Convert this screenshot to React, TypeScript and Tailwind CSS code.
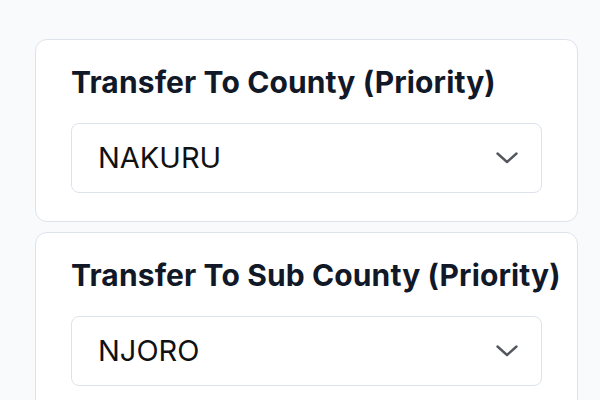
const fields = [
  { label: "Transfer To County (Priority)", value: "NAKURU" },
  { label: "Transfer To Sub County (Priority)", value: "NJORO" },
];

const Chevron = () => (
  <svg width="22" height="12" viewBox="0 0 22 12" fill="none" className="shrink-0">
    <path d="M1.5 1.5 L11 10 L20.5 1.5" stroke="#54585e" strokeWidth="2.4" strokeLinecap="round" strokeLinejoin="round" />
  </svg>
);

export default function App() {
  return (
    <div className="w-[600px] h-[400px] overflow-hidden bg-[#f9fafb] font-['Inter',sans-serif]">
      <div className="ml-[35px] mt-[39px] w-[543px] flex flex-col gap-[10px]">
        {fields.map((f) => (
          <div key={f.label} className="bg-white border border-[#dde3ec] rounded-[12px] pl-[35px] pr-[35px] pt-[24px] pb-[28px]">
            <h2 className="text-[30px] leading-[36px] font-bold text-[#111827] whitespace-nowrap tracking-[0.12px]">
              {f.label}
            </h2>
            <div className="mt-[23px] h-[70px] border border-[#dde3ec] rounded-[8px] flex items-center justify-between pl-[26px] pr-[23px]">
              <span className="text-[29px] text-[#111111]">{f.value}</span>
              <Chevron />
            </div>
          </div>
        ))}
      </div>
    </div>
  );
}
